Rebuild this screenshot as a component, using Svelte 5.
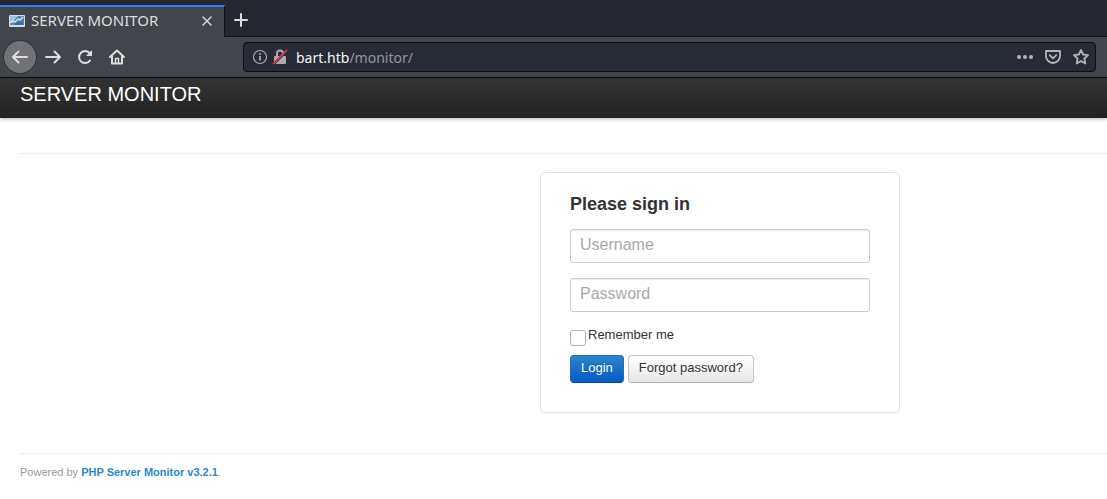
<script>
  let username = $state('');
  let password = $state('');
  let remember = $state(false);
</script>

<div class="browser">
  <div class="tabs">
    <div class="tab">
      <svg class="favicon" width="16" height="14" viewBox="0 0 16 14" aria-hidden="true">
        <rect x="0" y="1" width="16" height="12" rx="1" fill="#d5dde4" />
        <rect x="1" y="2" width="14" height="9" fill="#5585b3" />
        <path d="M1 2H9L6 5L4 9H1z" fill="#a9c4da" />
        <path d="M1 9L4 7L6 8L9 5L11 6L14 3" fill="none" stroke="#dce9f2" stroke-width="1.200" />
        <path d="M6 10L9 8H14V11H6z" fill="#3a699b" />
      </svg>
      <span class="title">SERVER MONITOR</span>
      <button class="icon" aria-label="Close tab">
        <svg width="16" height="16" viewBox="0 0 16 16"><path d="M4 4L12 12M12 4L4 12" stroke="#d2d2d3" stroke-width="1.600" stroke-linecap="round" /></svg>
      </button>
    </div>
    <button class="icon new" aria-label="New tab">
      <svg width="16" height="16" viewBox="0 0 16 16"><path d="M8 2V14M2 8H14" stroke="#dededf" stroke-width="2" stroke-linecap="round" /></svg>
    </button>
  </div>

  <div class="toolbar">
    <nav class="nav">
      <button class="icon back" aria-label="Back">
        <svg width="18" height="18" viewBox="0 0 18 18"><path d="M16 9H2M7.500 3.500L2 9L7.500 14.500" /></svg>
      </button>
      <button class="icon" aria-label="Forward">
        <svg width="18" height="18" viewBox="0 0 18 18"><path d="M2 9H16M10.500 3.500L16 9L10.500 14.500" /></svg>
      </button>
      <button class="icon" aria-label="Reload">
        <svg width="18" height="18" viewBox="0 0 18 18">
          <path d="M14 12.500A6 6 0 1 1 13.500 5L14.500 6" />
          <path d="M16 2V8H10z" fill="#dededf" stroke="none" />
        </svg>
      </button>
      <button class="icon" aria-label="Home">
        <svg width="18" height="18" viewBox="0 0 18 18">
          <path d="M2 9L9 2.500L16 9M4 8.500V15.500H14V8.500" />
          <path d="M7.500 15V10.500H10.500V15" stroke-width="1.500" />
        </svg>
      </button>
    </nav>

    <div class="address">
      <svg width="16" height="16" viewBox="0 0 16 16" fill="none" stroke="#a9abaf" aria-hidden="true">
        <circle cx="8" cy="8" r="6.500" stroke-width="1.200" />
        <path d="M8 7V11.500" stroke-width="1.800" /><path d="M8 4V5.800" stroke-width="1.800" />
      </svg>
      <svg class="lock" width="16" height="16" viewBox="0 0 16 16" aria-hidden="true">
        <path d="M5 8V4.500A3 3 0 0 1 11 4.500V8" fill="none" stroke="#a9abaf" stroke-width="2" />
        <rect x="2" y="7" width="12" height="8" rx="1" fill="#a9abaf" />
        <path d="M2.500 15.500L15.500 2.500" stroke="#272b35" stroke-width="1" />
        <path d="M1.500 14.500L14.500 1.500" stroke="#e22850" stroke-width="1.800" stroke-linecap="round" />
      </svg>
      <span class="url"><b>bart.htb</b>/monitor/</span>
      <button class="icon" aria-label="Page actions">
        <svg width="18" height="18" viewBox="0 0 18 18" fill="#b3b5b9"><circle cx="3" cy="9" r="2" /><circle cx="9" cy="9" r="2" /><circle cx="15" cy="9" r="2" /></svg>
      </button>
      <button class="icon" aria-label="Save to Pocket">
        <svg width="18" height="18" viewBox="0 0 18 18" fill="none" stroke="#b3b5b9" stroke-width="1.800" stroke-linejoin="round" stroke-linecap="round"><path d="M2 3H16V8A7 7 0 0 1 2 8z" /><path d="M5.700 7.200L9 10.300L12.300 7.200" /></svg>
      </button>
      <button class="icon" aria-label="Bookmark this page">
        <svg width="18" height="18" viewBox="0 0 18 18" fill="none" stroke="#b3b5b9" stroke-width="1.800" stroke-linejoin="round"><path d="M9 2L11.100 6.500L16 7.100L12.400 10.500L13.300 15.500L9 13L4.700 15.500L5.600 10.500L2 7.100L6.900 6.500z" /></svg>
      </button>
    </div>
  </div>
</div>

<header class="navbar"><a href="#home">SERVER MONITOR</a></header>

<main>
  <hr />
  <div class="center">
    <form class="card" onsubmit={(e) => e.preventDefault()}>
      <h1>Please sign in</h1>
      <input class="field" type="text" placeholder="Username" aria-label="Username" bind:value={username} />
      <input class="field" type="password" placeholder="Password" aria-label="Password" bind:value={password} />
      <label><input type="checkbox" bind:checked={remember} /><span>Remember me</span></label>
      <div class="actions">
        <button class="btn primary" type="submit">Login</button>
        <a class="btn" href="#forgot">Forgot password?</a>
      </div>
    </form>
  </div>
  <hr />
  <footer>Powered by <a href="#psm">PHP Server Monitor v3.2.1</a>.</footer>
</main>

<style>
  :global(body) {
    margin: 0;
    background: #fff;
    color: #333;
    font: 13px/20px "Liberation Sans", Arial, sans-serif;
  }
  * { box-sizing: border-box; }
  svg { display: block; flex: none; }
  a { text-decoration: none; }

  .browser { font: 14px/20px "Noto Sans", sans-serif; }
  .icon {
    display: flex;
    align-items: center;
    justify-content: center;
    padding: 0;
    border: 0;
    background: none;
  }
  .tabs {
    display: flex;
    height: 37px;
    padding-top: 5px;
    background: #242730;
    box-shadow: inset 0 -1px #111319;
  }
  .tab {
    display: flex;
    align-items: center;
    width: 225px;
    padding: 0 9px 2px;
    border-top: 2px solid #3080ed;
    border-right: 1px solid #111319;
    background: #42454c;
    color: #dededf;
  }
  .title { flex: 1; margin-left: 6px; padding-bottom: 2px; font-size: 15px; }
  .new { width: 32px; padding-bottom: 2px; }
  .toolbar {
    display: flex;
    align-items: center;
    height: 41px;
    padding: 0 11px 0 4px;
    border-bottom: 1px solid #0c0d10;
    background: #42454c;
  }
  .nav { display: flex; width: 239px; }
  .nav .icon { width: 32px; height: 34px; }
  .nav .back {
    height: 32px;
    margin: 1px 1px 1px 0;
    border-radius: 50%;
    background: #707276;
    box-shadow: 0 0 0 1px #2f3238;
  }
  .nav svg {
    fill: none;
    stroke: #dededf;
    stroke-width: 2;
    stroke-linecap: round;
    stroke-linejoin: round;
  }
  .address {
    display: flex;
    flex: 1;
    align-items: center;
    height: 30px;
    padding: 0 5px 0 8px;
    border: 1px solid #0c0d10;
    border-radius: 4px;
    background: #272b35;
  }
  .lock { margin-left: 4px; }
  .url { flex: 1; margin-left: 8px; padding-top: 1px; color: #92959b; }
  .url b { color: #f5f5f6; font-weight: 400; }
  .address .icon { width: 28px; height: 28px; }
  .address .icon:last-child { width: 18px; margin-left: 5px; }

  .navbar {
    height: 40px;
    padding: 6px 20px;
    background: linear-gradient(#333, #222);
    box-shadow: 0 1px 4px rgba(0, 0, 0, 0.3);
  }
  .navbar a { color: #fff; font-size: 20px; }

  main { padding: 35px 0 0 20px; }
  hr { margin: 0; border: 0; border-top: 1px solid #eee; }
  .center {
    display: grid;
    grid-template-columns: 520fr 360px 207fr;
    padding: 18px 0 40px;
  }
  .card {
    grid-column: 2;
    padding: 20px 29px 29px;
    border: 1px solid #e5e5e5;
    border-radius: 5px;
    box-shadow: 0 1px 2px rgba(0, 0, 0, 0.05);
  }
  h1 { margin: 0 0 13px; font-size: 18px; line-height: 23px; }
  .field {
    display: block;
    width: 100%;
    height: 34px;
    margin: 0 0 15px;
    padding: 4px 9px 7px;
    border: 1px solid #ccc;
    border-radius: 3px;
    background: #fff;
    box-shadow: inset 0 1px 1px rgba(0, 0, 0, 0.075);
    color: #555;
    font: 16px/20px "Liberation Sans", Arial, sans-serif;
  }
  .field::placeholder { color: #a9a9a9; }
  label { display: flex; gap: 2px; height: 28px; line-height: 16px; }
  label input {
    appearance: none;
    width: 16px;
    height: 16px;
    margin: 3px 0 0;
    border: 1px solid #b6b0a9;
    border-radius: 3px;
    background: #fff;
  }
  label input:checked { background: #08c; }
  .actions { display: flex; gap: 4px; }
  .btn {
    height: 28px;
    padding: 2px 10px;
    border: 1px solid #c5c5c5;
    border-bottom-color: #b3b3b3;
    border-radius: 4px;
    background: linear-gradient(#fff, #e6e6e6);
    box-shadow: 0 1px 2px rgba(0, 0, 0, 0.05);
    color: #333;
    font: 13px/20px "Liberation Sans", Arial, sans-serif;
    text-shadow: 0 1px 1px rgba(255, 255, 255, 0.75);
  }
  .primary {
    padding-bottom: 4px;
    border-color: #1d70b4 #1d70b4 #0849a5;
    background: linear-gradient(#2d85cb, #0459c8);
    color: #fff;
    text-shadow: 0 -1px rgba(0, 0, 0, 0.25);
  }
  footer { padding: 8px 0; color: #999; font-size: 11px; }
  footer a { color: #2589cb; font-weight: 700; }
</style>
